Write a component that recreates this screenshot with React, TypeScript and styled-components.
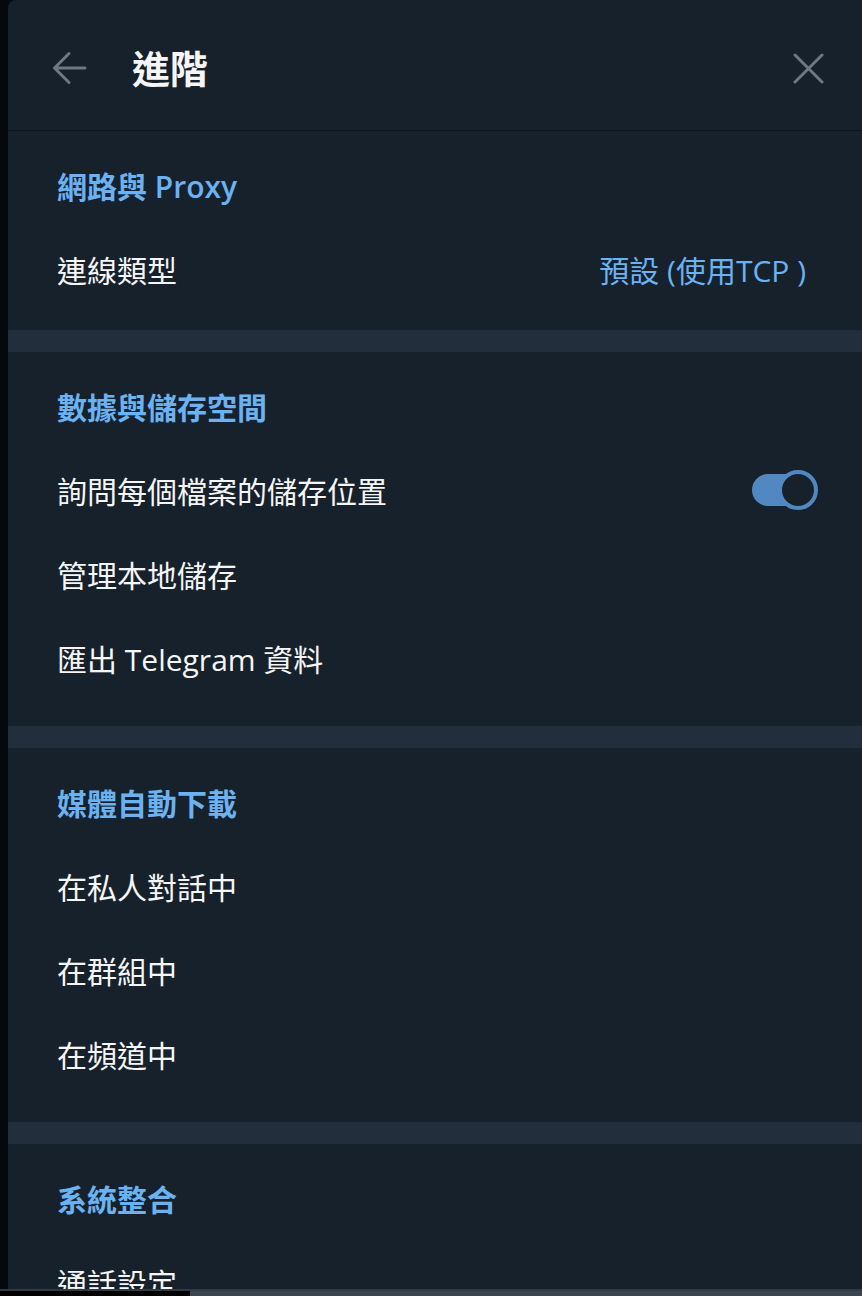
import React from "react";
import styled, { createGlobalStyle } from "styled-components";

const Global = createGlobalStyle`
  html, body { margin: 0; padding: 0; background: #05090d; }
  body { font-family: "Open Sans", "Noto Sans CJK TC", sans-serif; -webkit-font-smoothing: antialiased; }
  * { box-sizing: border-box; }
`;

const Screen = styled.div`
  display: flex;
  height: 1296px;
  overflow: hidden;
  padding-left: 8px;
  background: #05090d;
`;

const Panel = styled.div`
  flex: 1;
  display: flex;
  flex-direction: column;
  background: #17212b;
  border-top-left-radius: 8px;
`;

const Header = styled.header`
  height: 131px;
  flex: none;
  display: flex;
  align-items: center;
  padding: 6px 38px 0 44px;
  border-bottom: 1px solid #0e151c;
`;

const IconButton = styled.button`
  display: flex;
  align-items: center;
  justify-content: center;
  background: none;
  border: 0;
  padding: 0;
  color: #6d7883;
  cursor: pointer;
`;

const HeaderTitle = styled.h1`
  margin: 0 0 0 44px;
  flex: 1;
  font-family: "Open Sans", "Noto Sans CJK TC", sans-serif;
  font-size: 38px;
  font-weight: 700;
  color: #f5f5f5;
  line-height: 1;
`;

const Section = styled.section<{ $bottom: number }>`
  padding: 36px 56px ${(p) => p.$bottom}px 49px;
`;

const SectionTitle = styled.h2`
  margin: 0 0 20px;
  height: 40px;
  line-height: 40px;
  font-size: 30px;
  font-weight: 600;
  color: #6ab2f2;
  white-space: nowrap;
`;

const Row = styled.div`
  height: 84px;
  display: flex;
  align-items: center;
  justify-content: space-between;
  font-size: 30px;
  color: #f5f5f5;
  white-space: nowrap;
`;

const Value = styled.span`
  color: #6ab2f2;
  font-size: 30px;
`;

const Band = styled.div`
  height: 22px;
  flex: none;
  background: #232e3c;
`;

const Toggle = styled.span`
  position: relative;
  display: inline-block;
  width: 62px;
  height: 32px;
  margin-right: -8px;
  border-radius: 16px;
  background: #5288c1;
`;

const Knob = styled.span`
  position: absolute;
  right: -4px;
  top: -4px;
  width: 40px;
  height: 40px;
  border-radius: 50%;
  border: 4px solid #5288c1;
  background: #17212b;
`;

const WindowEdge = styled.div`
  position: fixed;
  left: 0;
  right: 0;
  bottom: 0;
  height: 7px;
  display: grid;
  grid-template-columns: 190px 1fr;
  border-top: 2px solid #2f3a45;
`;

const EdgePart = styled.div<{ $c: string }>`
  background: ${(p) => p.$c};
`;

const BackIcon = () => (
  <svg width="36" height="36" viewBox="0 0 36 36" fill="none" stroke="currentColor" strokeWidth="3" strokeLinecap="round" strokeLinejoin="round">
    <path d="M33 18H2.5M17 3.5L2.5 18L17 32.5" />
  </svg>
);

const CloseIcon = () => (
  <svg width="32" height="32" viewBox="0 0 32 32" fill="none" stroke="currentColor" strokeWidth="3" strokeLinecap="round">
    <path d="M3 3L30 30M30 3L3 30" />
  </svg>
);

type Item = { label: string; value?: string; toggle?: boolean };
type Group = { title: string; items: Item[]; bottom: number };

const groups: Group[] = [
  { title: "網路與 Proxy", items: [{ label: "連線類型", value: "預設 (使用TCP )" }], bottom: 19 },
  {
    title: "數據與儲存空間",
    items: [
      { label: "詢問每個檔案的儲存位置", toggle: true },
      { label: "管理本地儲存" },
      { label: "匯出 Telegram 資料" },
    ],
    bottom: 26,
  },
  {
    title: "媒體自動下載",
    items: [{ label: "在私人對話中" }, { label: "在群組中" }, { label: "在頻道中" }],
    bottom: 26,
  },
  { title: "系統整合", items: [{ label: "通話設定" }], bottom: 26 },
];

export default function App() {
  return (
    <>
      <Global />
      <Screen>
        <Panel>
          <Header>
            <IconButton aria-label="返回">
              <BackIcon />
            </IconButton>
            <HeaderTitle>進階</HeaderTitle>
            <IconButton aria-label="關閉">
              <CloseIcon />
            </IconButton>
          </Header>
          {groups.map((g, i) => (
            <React.Fragment key={g.title}>
              {i > 0 && <Band />}
              <Section $bottom={g.bottom}>
                <SectionTitle>{g.title}</SectionTitle>
                {g.items.map((it) => (
                  <Row key={it.label}>
                    <span>{it.label}</span>
                    {it.value && <Value>{it.value}</Value>}
                    {it.toggle && (
                      <Toggle>
                        <Knob />
                      </Toggle>
                    )}
                  </Row>
                ))}
              </Section>
            </React.Fragment>
          ))}
        </Panel>
      </Screen>
      <WindowEdge>
        <EdgePart $c="#000000" />
        <EdgePart $c="#3b4550" />
      </WindowEdge>
    </>
  );
}
